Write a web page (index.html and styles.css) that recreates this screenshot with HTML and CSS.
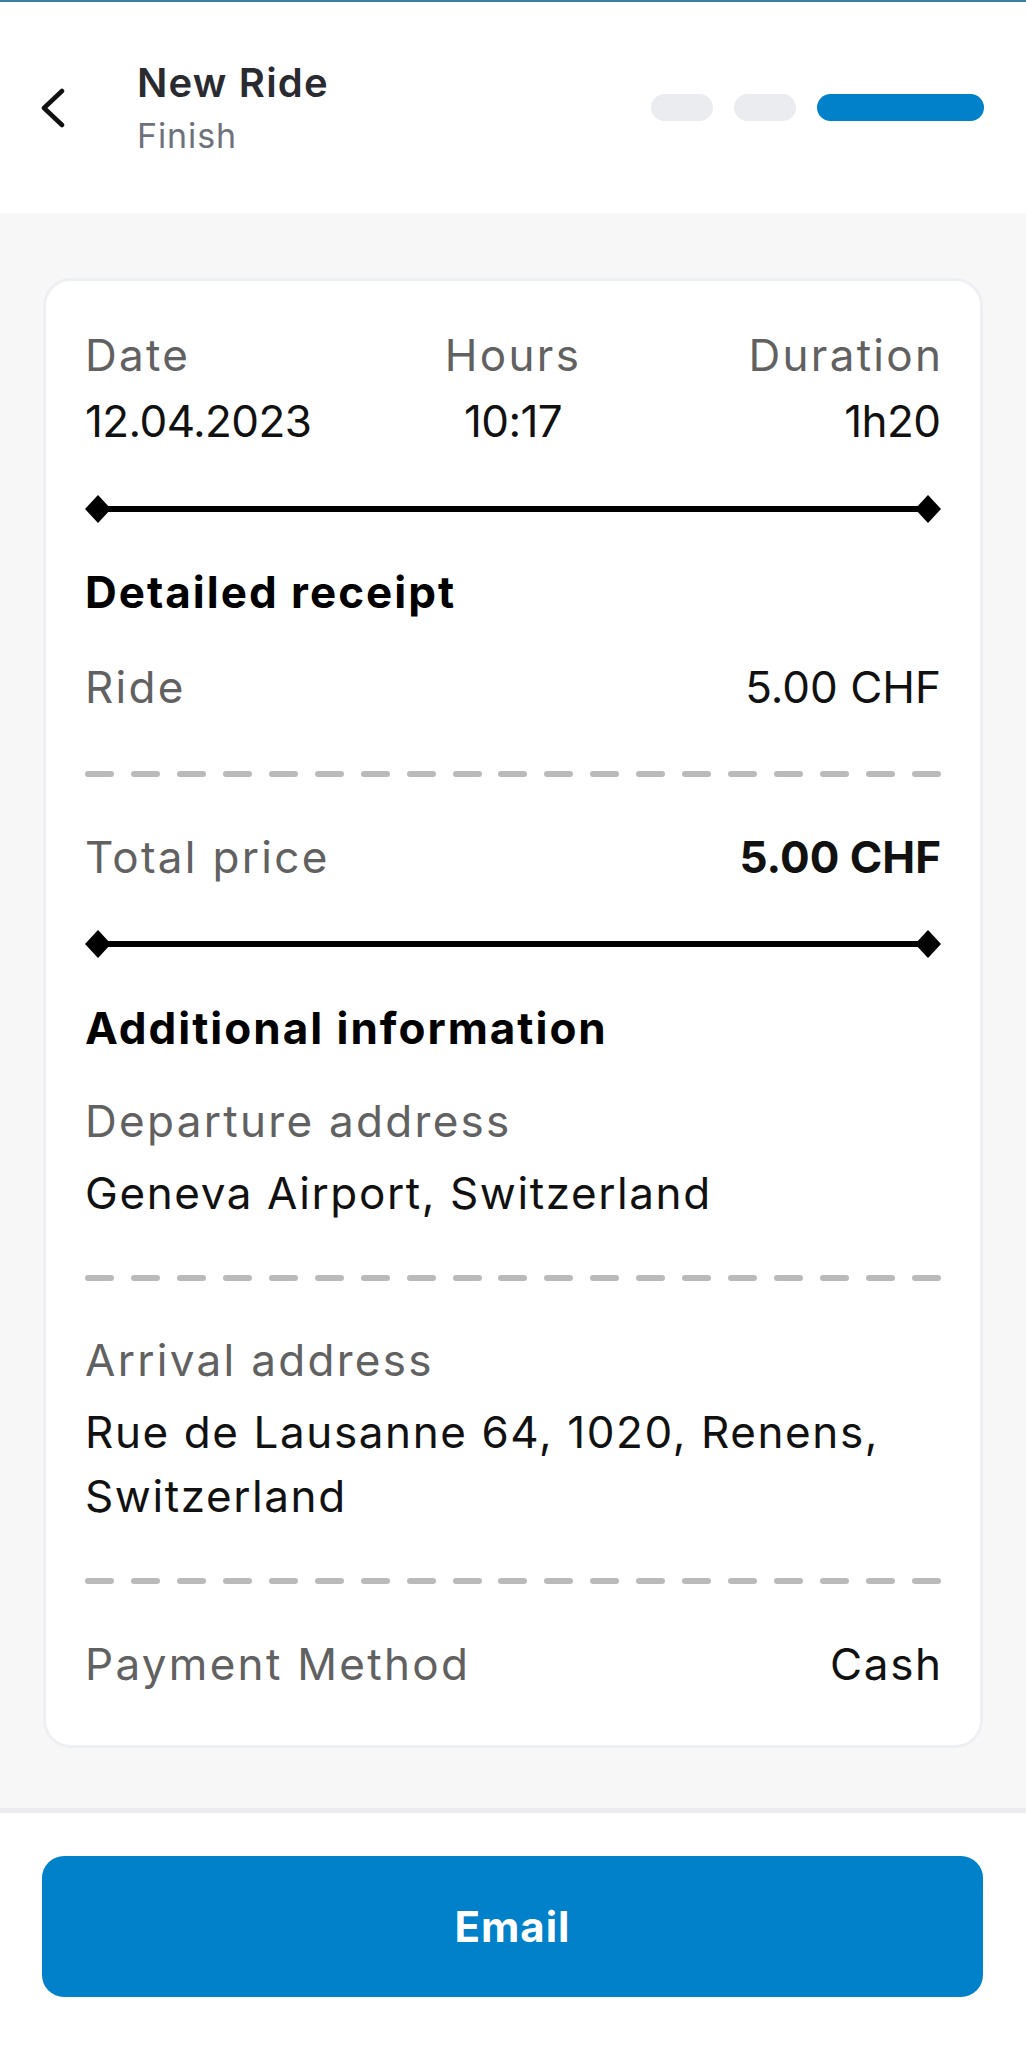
FILE: index.html
```html
<!DOCTYPE html>
<html lang="en">
<head>
<meta charset="utf-8">
<title>New Ride - Finish</title>
<link rel="stylesheet" href="styles.css">
</head>
<body>
<div class="app">
  <header class="topbar">
    <button class="back" aria-label="Back">
      <svg width="24" height="40" viewBox="0 0 24 40"><polyline points="21,3 3,20 21,37" fill="none" stroke="#111" stroke-width="4.5" stroke-linecap="round" stroke-linejoin="round"/></svg>
    </button>
    <div class="titles">
      <div class="title">New Ride</div>
      <div class="subtitle">Finish</div>
    </div>
    <div class="steps">
      <span class="step"></span>
      <span class="step"></span>
      <span class="step active"></span>
    </div>
  </header>

  <main class="content">
    <section class="card">
      <div class="triple">
        <div class="label">Date</div>
        <div class="label center">Hours</div>
        <div class="label right">Duration</div>
        <div class="value num">12.04.2023</div>
        <div class="value num center">10:17</div>
        <div class="value num right">1h20</div>
      </div>

      <div class="rule rule-1"><span class="diamond"></span><span class="bar"></span><span class="diamond"></span></div>

      <h2 class="heading h-receipt">Detailed receipt</h2>
      <div class="row row-ride"><span class="label">Ride</span><span class="value price">5.00 CHF</span></div>

      <div class="dashes d-1"><span></span><span></span><span></span><span></span><span></span><span></span><span></span><span></span><span></span><span></span><span></span><span></span><span></span><span></span><span></span><span></span><span></span><span></span><span></span></div>

      <div class="row row-total"><span class="label">Total price</span><span class="value price strong">5.00 CHF</span></div>

      <div class="rule rule-2"><span class="diamond"></span><span class="bar"></span><span class="diamond"></span></div>

      <h2 class="heading h-info">Additional information</h2>
      <div class="label l-dep">Departure address</div>
      <div class="value v-addr">Geneva Airport, Switzerland</div>

      <div class="dashes d-2"><span></span><span></span><span></span><span></span><span></span><span></span><span></span><span></span><span></span><span></span><span></span><span></span><span></span><span></span><span></span><span></span><span></span><span></span><span></span></div>

      <div class="label l-arr">Arrival address</div>
      <div class="value v-addr">Rue de Lausanne 64, 1020, Renens, Switzerland</div>

      <div class="dashes d-3"><span></span><span></span><span></span><span></span><span></span><span></span><span></span><span></span><span></span><span></span><span></span><span></span><span></span><span></span><span></span><span></span><span></span><span></span><span></span></div>

      <div class="row row-pay"><span class="label">Payment Method</span><span class="value cash">Cash</span></div>
    </section>
  </main>

  <footer class="footer">
    <button class="primary">Email</button>
  </footer>
</div>
</body>
</html>
```

FILE: styles.css
```css
* { box-sizing: border-box; }

html, body {
  margin: 0;
  padding: 0;
  background: #ffffff;
}

body {
  font-family: Inter, "Open Sans", "Noto Sans", sans-serif;
  color: #111111;
}

.app {
  width: 1026px;
  min-height: 2048px;
  background: #ffffff;
}

/* Header */
.topbar {
  height: 213px;
  border-top: 2px solid #3d7f9e;
  display: flex;
  align-items: center;
  padding: 0 42px 0 41px;
  background: #ffffff;
}

.back {
  width: 24px;
  height: 40px;
  padding: 0;
  border: 0;
  background: none;
  display: flex;
  margin-right: 72px;
}

.titles {
  flex: 1;
  display: flex;
  flex-direction: column;
  gap: 5px;
}

.title {
  font-size: 40px;
  line-height: 52px;
  font-weight: 600;
  color: #2a2a31;
  letter-spacing: 1.2px;
}

.subtitle {
  font-size: 34px;
  line-height: 44px;
  color: #6e727c;
  letter-spacing: 0.9px;
}

.steps {
  display: flex;
  gap: 21px;
  align-items: center;
}

.step {
  width: 62px;
  height: 27px;
  border-radius: 14px;
  background: #ebecef;
}

.step.active {
  width: 167px;
  background: #0081c9;
}

/* Content */
.content {
  background: #f7f7f8;
  padding: 65px 43px 60px 43px;
  border-bottom: 5px solid #ececf0;
}

.card {
  background: #ffffff;
  border: 3px solid #eeeff2;
  border-radius: 28px;
  padding: 42px 39px 49px 39px;
}

.label,
.value,
.heading {
  font-size: 44px;
  line-height: 64px;
  margin: 0;
}

.label {
  color: #616161;
  letter-spacing: 2.3px;
}

.heading {
  font-weight: 700;
  color: #000000;
  letter-spacing: 2px;
}

.value {
  color: #111111;
  letter-spacing: 1.6px;
}

.value.num {
  letter-spacing: -0.6px;
}

.value.price {
  letter-spacing: 0;
}

.value.strong {
  font-weight: 700;
}

.triple {
  display: grid;
  grid-template-columns: 1fr 1fr 1fr;
  row-gap: 2px;
}

.center { text-align: center; }
.right { text-align: right; }

/* compensate trailing letter-spacing on right-aligned text */
.label.right { margin-right: -2.3px; }
.value.num.right { margin-right: 0.6px; }
.value.cash { margin-right: -1.6px; }

.rule {
  display: flex;
  align-items: center;
  height: 28px;
}

.rule .diamond {
  width: 26px;
  height: 28px;
  background: #000000;
  clip-path: polygon(50% 0, 100% 50%, 50% 100%, 0 50%);
  flex: none;
}

.rule .bar {
  flex: 1;
  height: 6px;
  background: #000000;
  margin: 0 -4px;
}

.row {
  display: flex;
  justify-content: space-between;
}

.dashes {
  display: flex;
  justify-content: space-between;
  height: 6px;
}

.dashes span {
  width: 29px;
  height: 6px;
  border-radius: 3px;
  background: #bababa;
}

.rule-1 { margin-top: 42px; }
.h-receipt { margin-top: 37px; }
.row-ride { margin-top: 31px; }
.d-1 { margin-top: 52px; }
.row-total { margin-top: 48px; }
.rule-2 { margin-top: 41px; }
.h-info { margin-top: 38px; }
.l-dep { margin-top: 29px; }
.v-addr { margin-top: 8px; }
.d-2 { margin-top: 50px; }
.l-arr { margin-top: 47px; }
.d-3 { margin-top: 50px; }
.row-pay { margin-top: 48px; }

/* Footer */
.footer {
  padding: 43px 43px 51px 42px;
  background: #ffffff;
}

.primary {
  display: block;
  width: 100%;
  height: 141px;
  border: 0;
  border-radius: 22px;
  background: #0081c9;
  color: #ffffff;
  font-family: Inter, "Open Sans", sans-serif;
  font-size: 42px;
  font-weight: 700;
  letter-spacing: 1px;
}
```
